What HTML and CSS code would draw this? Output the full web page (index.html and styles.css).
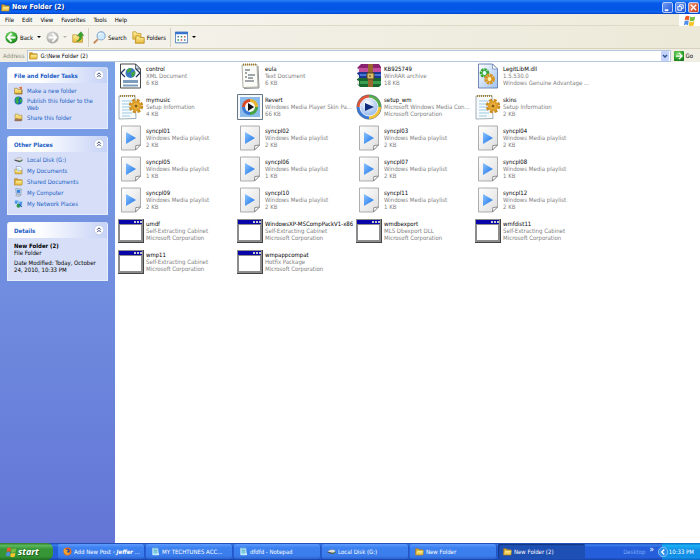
FILE: index.html
```html
<!DOCTYPE html>
<html lang="en">
<head>
<meta charset="utf-8">
<title>New Folder (2)</title>
<link rel="stylesheet" href="styles.css">
</head>
<body>
<svg class="sprite" aria-hidden="true">
  <defs>
    <linearGradient id="paper" x1="0" y1="0" x2="1" y2="1"><stop offset="0" stop-color="#fff"/><stop offset="1" stop-color="#dedede"/></linearGradient>
    <linearGradient id="play" x1="0" y1="0" x2="1" y2="1"><stop offset="0" stop-color="#8cc4ff"/><stop offset="1" stop-color="#1670e8"/></linearGradient>
    <linearGradient id="gold" x1="0" y1="0" x2="0" y2="1"><stop offset="0" stop-color="#fff3a0"/><stop offset="1" stop-color="#e8b93a"/></linearGradient>
    <radialGradient id="green" cx=".4" cy=".3" r=".8"><stop offset="0" stop-color="#8ee27c"/><stop offset=".6" stop-color="#2fa32b"/><stop offset="1" stop-color="#14701a"/></radialGradient>
    <radialGradient id="grey" cx=".4" cy=".3" r=".8"><stop offset="0" stop-color="#ddd"/><stop offset="1" stop-color="#a0a09c"/></radialGradient>
    <radialGradient id="orb" cx=".4" cy=".3" r=".8"><stop offset="0" stop-color="#fff"/><stop offset="1" stop-color="#86aee8"/></radialGradient>
    <linearGradient id="blue" x1="0" y1="0" x2="1" y2="1"><stop offset="0" stop-color="#fff"/><stop offset="1" stop-color="#9dc2f2"/></linearGradient>
  </defs>
  <symbol id="i-playlist" viewBox="0 0 26 26"><path d="M3.500 1h19v19l-5 5h-14z" fill="url(#paper)" stroke="#9a9a9a" stroke-width=".8"/><path d="M22.500 20l-5 5 .3-4.400z" fill="#fff" stroke="#777" stroke-width=".8"/><path d="M8 7l10 6-10 6z" fill="url(#play)"/></symbol>
  <symbol id="i-window" viewBox="0 0 26 26"><path d="M0 1h26v24H0z" fill="#8c8c8c"/><path d="M25 1h1v24H0v-1h25z" fill="#444"/><path d="M1 2h23v4H1z" fill="#0806a8"/><path d="M2 7h21v15H2z" fill="#fff"/><path d="M16 3h2v2h-2zM19 3h2v2h-2zM22 3h2v2h-2z" fill="#c8c8d0"/></symbol>
  <symbol id="i-xml" viewBox="0 0 26 26"><path d="M2.500 1h15l5 5v19h-20z" fill="#fff" stroke="#333" stroke-width=".9"/><path d="M17.500 1v5h5z" fill="#cde" stroke="#333" stroke-width=".7"/><circle cx="12.500" cy="10" r="5" fill="#3978c8"/><path d="M9 7q3-3 5-1l-2 3-3 1zM13 10l4-2q1 4-3 6z" fill="#45a63a"/><path d="M7 6L3 10l4 4M18 6l4 4-4 4" fill="none" stroke="#223a5c" stroke-width="1.300"/><path d="M5 17h15v3H5zM5 21.500h15v2H5z" fill="#7d9dbf"/></symbol>
  <symbol id="i-text" viewBox="0 0 26 26"><path d="M5 2l15-.5 1 22.500-15 .5z" fill="#fbfbf8" stroke="#9a9a90" stroke-width=".8"/><path d="M21 3l1 22-15 .5" fill="none" stroke="#777" stroke-width=".8"/><path d="M6 1.500h14" stroke="#a57b25" stroke-width="2" stroke-dasharray="1 1"/><path d="M8 7h5M8 10h2M11 12h7M8 14h2M11 15h5M8 18h9" stroke="#45505a"/></symbol>
  <symbol id="i-setup" viewBox="0 0 26 26"><path d="M1 2l16-.5 1 23L1 25z" fill="#f8fcff" stroke="#8b9aa0" stroke-width=".8"/><path d="M2 2h15" stroke="#a88538" stroke-width="2" stroke-dasharray="1 1"/><path d="M4 7h10M4 10h9M4 13h10M4 16h10M4 19h10M4 22h8" stroke="#9cc9df"/><circle cx="18" cy="12" r="5" fill="none" stroke="#c98c22" stroke-width="4.500" stroke-dasharray="2.500 1.430"/><circle cx="18" cy="12" r="4" fill="#f2bb42" stroke="#dda02c" stroke-width="2.500"/><circle cx="18" cy="12" r="1.600" fill="#8a5b14"/></symbol>
  <symbol id="i-wmp" viewBox="0 0 26 26"><circle cx="13" cy="13" r="12.500" fill="#637086"/><path d="M13 13V1A12 12 0 0 0 1 13z" fill="#dd5436"/><path d="M13 13V1a12 12 0 0 1 12 12z" fill="#55ad4a"/><path d="M13 13h12a12 12 0 0 1-12 12z" fill="#f3c43a"/><path d="M13 13v12A12 12 0 0 1 1 13z" fill="#3a79d5"/><circle cx="13" cy="13" r="9" fill="url(#orb)" stroke="#eef" stroke-width="1"/><path d="M9 9l9 4-9 4z" fill="#102e7b"/></symbol>
  <symbol id="i-skin" viewBox="0 0 26 26"><path d="M.5.5h25v25H.5z" fill="#f6f8fa" stroke="#657684"/><path d="M3 3h20v20H3z" fill="#8abbea"/><path d="M13 13V5a8 8 0 0 0-8 8z" fill="#d94a28"/><path d="M13 13V5a8 8 0 0 1 8 8z" fill="#e9b52d"/><path d="M13 13h8a8 8 0 0 1-8 8z" fill="#45a443"/><path d="M13 13v8a8 8 0 0 1-8-8z" fill="#3a79d5"/><circle cx="13" cy="13" r="5" fill="#f7f7f7"/><path d="M11 9l6 4-6 4z" fill="#111"/></symbol>
  <symbol id="i-rar" viewBox="0 0 26 26"><path d="M1 5l4-4h18l2 3v5H3z" fill="#8b2470"/><path d="M3 5h22v4H3z" fill="#c2509c"/><path d="M1 10l2-1h22v6H3z" fill="#1c3797"/><path d="M4 11h21v2H4z" fill="#4878d5"/><path d="M1 16l2-1h22v7l-2 2H4l-3-3z" fill="#17672f"/><path d="M4 18h21v3H4z" fill="#3ba052"/><path d="M1 5l2 1v3l-2-1zM1 11l2 1v3l-2-1zM1 17l2 1v4l-2-1z" fill="#eee"/><path d="M12 1h5v23h-5z" fill="#9b6730"/><path d="M11 10h7v6h-7z" fill="#dbc06c" stroke="#594019"/><path d="M14 12v2" stroke="#594019"/></symbol>
  <symbol id="i-dll" viewBox="0 0 26 26"><path d="M3.500 1h14l5 5v19h-19z" fill="url(#blue)" stroke="#637eac" stroke-width=".9"/><path d="M17.500 1v5h5z" fill="#fff" stroke="#637eac" stroke-width=".7"/><circle cx="9.500" cy="10" r="3.200" fill="#dff" stroke="#36a535" stroke-width="3.200" stroke-dasharray="2.300 .6"/><circle cx="9.500" cy="10" r="2.500" fill="#dff" stroke="#36a535"/><circle cx="14.500" cy="16" r="3.800" fill="none" stroke="#d89420" stroke-width="3.200" stroke-dasharray="2.400 .6"/><circle cx="14.500" cy="16" r="2.500" fill="#fff0b0" stroke="#d89420"/></symbol>
  <symbol id="i-folder" viewBox="0 0 16 16"><path d="M1 3h5l2 2h6v9H1z" fill="#e0a92b" stroke="#a17516"/><path d="M1 14L3 6h12l-1 8z" fill="url(#gold)" stroke="#b88a20" stroke-width=".8"/></symbol>
  <symbol id="i-folders" viewBox="0 0 16 16"><path d="M1 1h4l1 2h5v7H1z" fill="url(#gold)" stroke="#c39a34"/><path d="M5 6h4l1 2h5v7H4z" fill="url(#gold)" stroke="#b88a20"/></symbol>
  <symbol id="i-new" viewBox="0 0 16 16"><path d="M1 4h5l1 2h7v8H1z" fill="url(#gold)" stroke="#936b20"/><path d="M8 3l6-2v5z" fill="#e5692c"/><path d="M3 14h11V7" fill="none" stroke="#805b24"/></symbol>
  <symbol id="i-globe" viewBox="0 0 16 16"><circle cx="8" cy="8" r="7" fill="#195fbe"/><path d="M4 2q5-2 6 1L7 7l2 3-3 5Q0 9 4 2zM10 6l4-1q2 5-3 8z" fill="#35ad49"/></symbol>
  <symbol id="i-share" viewBox="0 0 16 16"><path d="M2 2h5l1 2h6v9H2z" fill="url(#gold)" stroke="#a57c27"/><path d="M1 13q3-5 7-2h5v3H3z" fill="#ac795b" stroke="#60504a" stroke-width=".7"/></symbol>
  <symbol id="i-disk" viewBox="0 0 16 16"><path d="M1 8l5-3h7l2 3v2l-5 3-9-3z" fill="#555"/><path d="M1 8l5-3h7l2 3-5 2z" fill="#ddd"/><path d="M10 11l4-2" stroke="#55d755"/></symbol>
  <symbol id="i-docs" viewBox="0 0 16 16"><path d="M4 1h7l3 3v9H4z" fill="#fff" stroke="#678bb4"/><path d="M1 6h4l1 2h8v6H2z" fill="url(#gold)" stroke="#a88838"/><path d="M6 4h4v6H6z" fill="#b6def3"/></symbol>
  <symbol id="i-computer" viewBox="0 0 16 16"><path d="M3 1l10 1-1 9-8-1z" fill="#dce6f0" stroke="#667d9c"/><path d="M5 3l6 .5-.5 5.500L5 8.500z" fill="#3687df"/><path d="M4 12h9l-3 3-7-1z" fill="#d5dce5" stroke="#687890" stroke-width=".7"/></symbol>
  <symbol id="i-network" viewBox="0 0 16 16"><path d="M1 2h8v7H1zM7 4h8v7H7z" fill="#4b96e6" stroke="#dce9f6"/><circle cx="8" cy="12" r="3.500" fill="#2b9a52"/><path d="M9 9l5 5" stroke="#1b5ba7" stroke-width="2"/></symbol>
  <symbol id="i-note" viewBox="0 0 16 16"><path d="M3 2h9l1 12H3z" fill="#9be0ef" stroke="#e9faff"/><path d="M4 2h8M5 6h6M5 9h6" stroke="#3b86a7"/><path d="M11 14l3-4v4z" fill="#e9faff"/></symbol>
  <symbol id="i-fox" viewBox="0 0 16 16"><circle cx="8" cy="8" r="7" fill="#e6661b"/><circle cx="8" cy="7" r="4" fill="#2a4aa0"/><path d="M1 5l2-3 3 3 4 1-3 2q1 4 7 1-2 6-8 5-5-2-5-9z" fill="#f2a12c"/></symbol>
  <symbol id="i-flag" viewBox="0 0 16 16"><path d="M3 3q3-2 5 0L7 8q-2-2-5 0z" fill="#ef5b28"/><path d="M9 3q2 2 6 0l-1 5q-4 2-6 0z" fill="#79bd42"/><path d="M2 9q3-2 5 0l-1 5q-2-2-5 0z" fill="#4f8de8"/><path d="M8 9q2 2 6 0l-1 5q-4 2-6 0z" fill="#f7c52c"/></symbol>
  <symbol id="i-back" viewBox="0 0 16 16"><circle cx="8" cy="8" r="7.500" fill="url(#green)"/><path d="M8 3L3.500 8 8 13M4 8h9" fill="none" stroke="#fff" stroke-width="2.200"/></symbol>
  <symbol id="i-forward" viewBox="0 0 16 16"><circle cx="8" cy="8" r="7.500" fill="url(#grey)"/><path d="M8 3l4.500 5L8 13M12 8H3" fill="none" stroke="#fff" stroke-width="2.200"/></symbol>
  <symbol id="i-up" viewBox="0 0 16 16"><path d="M1 5h5l1 2h7v8H1z" fill="url(#gold)" stroke="#b99634"/><path d="M6 14q5-2 4-8H7l5-5 3.500 5H13q1 7-7 8z" fill="#38a52d" stroke="#20751c" stroke-width=".6"/></symbol>
  <symbol id="i-search" viewBox="0 0 16 16"><path d="M6 10l-5 5" stroke="#c88c60" stroke-width="2.400"/><circle cx="10" cy="6" r="5" fill="#cfeafc" stroke="#86a6c8" stroke-width="1.300"/><path d="M7 5q1-2 3-2" fill="none" stroke="#fff" stroke-width="1.300"/></symbol>
  <symbol id="i-views" viewBox="0 0 16 16"><path d="M.5 1.500h15v13H.5z" fill="#fff" stroke="#3469b5"/><path d="M0 1h16v3H0z" fill="#3973cc"/><path d="M3 6h2v2H3zM11 10h2v2h-2z" fill="#4a7db5"/><path d="M7 6h2v2H7zM3 10h2v2H3z" fill="#45954d"/><path d="M11 6h2v2h-2zM7 10h2v2H7z" fill="#cb604c"/></symbol>
  <symbol id="i-go" viewBox="0 0 16 16"><path d="M1 0h14l1 1v14l-1 1H1l-1-1V1z" fill="url(#green)"/><path d="M8 3l5 5-5 5M12 8H3" fill="none" stroke="#fff" stroke-width="2"/></symbol>
  <symbol id="i-chevrons" viewBox="0 0 16 16"><circle cx="8" cy="8" r="7.500" fill="#fff" stroke="#b3bfdf"/><path d="M5 7.500l3-3 3 3M5 11.500l3-3 3 3" fill="none" stroke="#26366b" stroke-width="1.500"/></symbol>
  <symbol id="i-down" viewBox="0 0 16 16"><path d="M4 6l4 4 4-4" fill="none" stroke="#31528f" stroke-width="3"/></symbol>
  <symbol id="i-caret" viewBox="0 0 8 8"><path d="M0 2h8L4 6z" fill="currentColor"/></symbol>
  <symbol id="i-tray" viewBox="0 0 16 16"><circle cx="8" cy="8" r="7.500" fill="#2b8ee8" stroke="#b6e2ff"/><path d="M10 4L6 8l4 4" fill="none" stroke="#fff" stroke-width="2.400"/></symbol>
</svg>

<header class="titlebar">
  <svg class="small"><use href="#i-folder"/></svg>
  <h1>New Folder (2)</h1>
  <button class="caption" aria-label="Minimize"><svg viewBox="0 0 10 10"><path d="M2 7h4v2H2z" fill="#fff"/></svg></button>
  <button class="caption" aria-label="Restore"><svg viewBox="0 0 10 10"><path d="M4 4V2h4v4H6M2 4h4v4H2z" fill="none" stroke="#fff"/></svg></button>
  <button class="caption close" aria-label="Close"><svg viewBox="0 0 10 10"><path d="M2 2l6 6M8 2L2 8" stroke="#fff" stroke-width="1.500"/></svg></button>
</header>

<nav class="menubar">
  <button>File</button><button>Edit</button><button>View</button><button>Favorites</button><button>Tools</button><button>Help</button>
  <span class="brand"><svg class="large"><use href="#i-flag"/></svg></span>
</nav>

<div class="toolbar">
  <button class="tool"><svg class="large"><use href="#i-back"/></svg>Back<svg class="caret"><use href="#i-caret"/></svg></button>
  <button class="tool faded" aria-label="Forward"><svg class="large"><use href="#i-forward"/></svg><svg class="caret"><use href="#i-caret"/></svg></button>
  <button class="tool" aria-label="Up"><svg class="medium"><use href="#i-up"/></svg></button>
  <span class="rule"></span>
  <button class="tool"><svg class="large"><use href="#i-search"/></svg>Search</button>
  <button class="tool"><svg class="large"><use href="#i-folders"/></svg>Folders</button>
  <span class="rule"></span>
  <button class="tool views" aria-label="Views"><svg class="large"><use href="#i-views"/></svg><svg class="caret"><use href="#i-caret"/></svg></button>
</div>

<form class="addressbar">
  <label for="address">Address</label>
  <div class="field">
    <svg class="small"><use href="#i-folder"/></svg>
    <input id="address" type="text" value="G:\New Folder (2)">
    <button type="button" class="drop" aria-label="Show addresses"><svg><use href="#i-down"/></svg></button>
  </div>
  <button type="button" class="go"><svg class="icon"><use href="#i-go"/></svg>Go</button>
</form>

<div class="content">
  <aside class="sidebar">
    <section class="panel">
      <header><h2>File and Folder Tasks</h2><button aria-label="Collapse tasks"><svg><use href="#i-chevrons"/></svg></button></header>
      <ul class="tasklist">
        <li><svg class="small"><use href="#i-new"/></svg><a href="#">Make a new folder</a></li>
        <li><svg class="small"><use href="#i-globe"/></svg><a href="#">Publish this folder to the Web</a></li>
        <li><svg class="small"><use href="#i-share"/></svg><a href="#">Share this folder</a></li>
      </ul>
    </section>
    <section class="panel">
      <header><h2>Other Places</h2><button aria-label="Collapse places"><svg><use href="#i-chevrons"/></svg></button></header>
      <ul class="places">
        <li><svg class="small"><use href="#i-disk"/></svg><a href="#">Local Disk (G:)</a></li>
        <li><svg class="small"><use href="#i-docs"/></svg><a href="#">My Documents</a></li>
        <li><svg class="small"><use href="#i-folder"/></svg><a href="#">Shared Documents</a></li>
        <li><svg class="small"><use href="#i-computer"/></svg><a href="#">My Computer</a></li>
        <li><svg class="small"><use href="#i-network"/></svg><a href="#">My Network Places</a></li>
      </ul>
    </section>
    <section class="panel">
      <header><h2>Details</h2><button aria-label="Collapse details"><svg><use href="#i-chevrons"/></svg></button></header>
      <div class="details">
        <strong>New Folder (2)</strong>
        <p>File Folder</p>
        <p class="modified">Date Modified: Today, October 24, 2010, 10:33 PM</p>
      </div>
    </section>
  </aside>

  <main class="files">
    <article><svg><use href="#i-xml"/></svg><div><h3>control</h3><p>XML Document</p><p>6 KB</p></div></article>
    <article><svg><use href="#i-text"/></svg><div><h3>eula</h3><p>Text Document</p><p>6 KB</p></div></article>
    <article><svg><use href="#i-rar"/></svg><div><h3>KB925749</h3><p>WinRAR archive</p><p>18 KB</p></div></article>
    <article><svg><use href="#i-dll"/></svg><div><h3>LegitLibM.dll</h3><p>1.5.530.0</p><p>Windows Genuine Advantage ...</p></div></article>
    <article><svg><use href="#i-setup"/></svg><div><h3>mymusic</h3><p>Setup Information</p><p>4 KB</p></div></article>
    <article><svg><use href="#i-skin"/></svg><div><h3>Revert</h3><p>Windows Media Player Skin Pa...</p><p>66 KB</p></div></article>
    <article><svg><use href="#i-wmp"/></svg><div><h3>setup_wm</h3><p>Microsoft Windows Media Con...</p><p>Microsoft Corporation</p></div></article>
    <article><svg><use href="#i-setup"/></svg><div><h3>skins</h3><p>Setup Information</p><p>2 KB</p></div></article>
    <article><svg><use href="#i-playlist"/></svg><div><h3>syncpl01</h3><p>Windows Media playlist</p><p>2 KB</p></div></article>
    <article><svg><use href="#i-playlist"/></svg><div><h3>syncpl02</h3><p>Windows Media playlist</p><p>2 KB</p></div></article>
    <article><svg><use href="#i-playlist"/></svg><div><h3>syncpl03</h3><p>Windows Media playlist</p><p>2 KB</p></div></article>
    <article><svg><use href="#i-playlist"/></svg><div><h3>syncpl04</h3><p>Windows Media playlist</p><p>2 KB</p></div></article>
    <article><svg><use href="#i-playlist"/></svg><div><h3>syncpl05</h3><p>Windows Media playlist</p><p>1 KB</p></div></article>
    <article><svg><use href="#i-playlist"/></svg><div><h3>syncpl06</h3><p>Windows Media playlist</p><p>1 KB</p></div></article>
    <article><svg><use href="#i-playlist"/></svg><div><h3>syncpl07</h3><p>Windows Media playlist</p><p>2 KB</p></div></article>
    <article><svg><use href="#i-playlist"/></svg><div><h3>syncpl08</h3><p>Windows Media playlist</p><p>1 KB</p></div></article>
    <article><svg><use href="#i-playlist"/></svg><div><h3>syncpl09</h3><p>Windows Media playlist</p><p>2 KB</p></div></article>
    <article><svg><use href="#i-playlist"/></svg><div><h3>syncpl10</h3><p>Windows Media playlist</p><p>2 KB</p></div></article>
    <article><svg><use href="#i-playlist"/></svg><div><h3>syncpl11</h3><p>Windows Media playlist</p><p>1 KB</p></div></article>
    <article><svg><use href="#i-playlist"/></svg><div><h3>syncpl12</h3><p>Windows Media playlist</p><p>2 KB</p></div></article>
    <article><svg><use href="#i-window"/></svg><div><h3>umdf</h3><p>Self-Extracting Cabinet</p><p>Microsoft Corporation</p></div></article>
    <article><svg><use href="#i-window"/></svg><div><h3>WindowsXP-MSCompPackV1-x86</h3><p>Self-Extracting Cabinet</p><p>Microsoft Corporation</p></div></article>
    <article><svg><use href="#i-window"/></svg><div><h3>wmdbexport</h3><p>MLS Dbexport DLL</p><p>Microsoft Corporation</p></div></article>
    <article><svg><use href="#i-window"/></svg><div><h3>wmfdist11</h3><p>Self-Extracting Cabinet</p><p>Microsoft Corporation</p></div></article>
    <article><svg><use href="#i-window"/></svg><div><h3>wmp11</h3><p>Self-Extracting Cabinet</p><p>Microsoft Corporation</p></div></article>
    <article><svg><use href="#i-window"/></svg><div><h3>wmpappcompat</h3><p>Hotfix Package</p><p>Microsoft Corporation</p></div></article>
  </main>
</div>

<footer class="taskbar">
  <button class="start"><svg class="medium"><use href="#i-flag"/></svg>start</button>
  <div class="windows">
    <button><svg class="small"><use href="#i-fox"/></svg><span>Add New Post ‹ <i>Jeffer</i> ...</span></button>
    <button><svg class="small"><use href="#i-note"/></svg><span>MY TECHTUNES ACC...</span></button>
    <button><svg class="small"><use href="#i-note"/></svg><span>dfdfd - Notepad</span></button>
    <button><svg class="small"><use href="#i-disk"/></svg><span>Local Disk (G:)</span></button>
    <button><svg class="small"><use href="#i-folder"/></svg><span>New Folder</span></button>
    <button class="active"><svg class="small"><use href="#i-folder"/></svg><span>New Folder (2)</span></button>
  </div>
  <div class="desktop">Desktop <sup>»</sup></div>
  <div class="tray"><button aria-label="Show hidden icons"><svg class="icon"><use href="#i-tray"/></svg></button><time>10:33 PM</time></div>
</footer>
</body>
</html>
```
FILE: styles.css
```css
* { box-sizing: border-box; }

body {
  margin: 0;
  height: 100vh;
  display: flex;
  flex-direction: column;
  overflow: hidden;
  background: #fff;
  color: #000;
  font: 6px/7px "DejaVu Sans Condensed", "Noto Sans", sans-serif;
}

h1, h2, h3, p, ul { margin: 0; padding: 0; }
ul { list-style: none; }
a { color: #215dc6; text-decoration: none; }
button, input { margin: 0; padding: 0; border: 0; background: none; color: inherit; font: inherit; }
svg { display: block; flex: none; }

.sprite { position: absolute; width: 0; height: 0; }
.icon { width: 10px; height: 10px; }
.small { width: 9px; height: 9px; }
.medium { width: 12px; height: 12px; }
.large { width: 13px; height: 13px; }
.caret { width: 4px; height: 4px; }

.titlebar {
  flex: none;
  height: 14px;
  display: flex;
  align-items: center;
  gap: 2px;
  padding: 0 1px;
  background: linear-gradient(#2b80f5, #0458e8 25%, #0456e4 70%, #0a64f8 85%, #0340c0);
  color: #fff;
}
.titlebar h1 { flex: 1; font-size: 7px; text-shadow: 1px 1px 0 #0a2f8a; }
.caption {
  width: 11px;
  height: 11px;
  border: 1px solid #b8cdf6;
  border-radius: 2px;
  background: linear-gradient(135deg, #6f9df4, #2055d8);
}
.caption svg { width: 9px; height: 9px; }
.close { background: linear-gradient(135deg, #f09a7a, #d13a10); }

.menubar {
  flex: none;
  height: 12px;
  display: flex;
  align-items: center;
  gap: 8px;
  padding-left: 5px;
  background: linear-gradient(90deg, #f7f7f3, #eeead9);
  border-bottom: 1px solid #dedac8;
}
.brand {
  width: 21px;
  height: 12px;
  margin-left: auto;
  display: grid;
  place-items: center;
  background: #fff;
}

.toolbar {
  flex: none;
  height: 23px;
  display: flex;
  align-items: center;
  gap: 5px;
  padding: 0 5px;
  background: linear-gradient(90deg, #f5f4ee, #ece9d8);
  border-bottom: 1px solid #d8d2bd;
}
.tool { display: flex; align-items: center; gap: 2px; }
.tool .caret { margin-left: 2px; }
.rule { width: 1px; height: 19px; margin: 0 -1px; background: #d5d1c0; }
.faded { color: #b5b3a8; }

.addressbar {
  flex: none;
  height: 13px;
  display: flex;
  align-items: center;
  gap: 3px;
  padding: 0 7px 0 3px;
  background: #f0eee2;
}
.addressbar label { color: #8a887c; }
.field {
  flex: 1;
  height: 12px;
  display: flex;
  align-items: center;
  gap: 2px;
  padding: 0 1px;
  border: 1px solid #b5c7dd;
  background: #fff;
}
.field input { flex: 1; height: 10px; min-width: 0; outline: 0; }
.drop { width: 8px; height: 10px; background: #c3d3fb; border-radius: 1px; }
.drop svg { width: 8px; height: 8px; }
.go { display: flex; align-items: center; gap: 2px; }

.content { flex: 1; min-height: 0; display: flex; }

.sidebar {
  flex: none;
  width: 115px;
  padding: 5px 7px;
  display: flex;
  flex-direction: column;
  gap: 7px;
  background: linear-gradient(#7ba2e7, #6375d6);
}
.panel {
  background: #d6dff7;
  border: 1px solid #e8edfb;
  border-top: 0;
  border-radius: 3px 3px 0 0;
}
.panel header {
  height: 16px;
  display: flex;
  align-items: center;
  justify-content: space-between;
  padding: 0 3px 0 6px;
  border-radius: 3px 3px 0 0;
  background: linear-gradient(90deg, #fff 30%, #c6d3f7);
}
.panel h2 { font-size: 6px; color: #215dc6; }
.panel header svg { width: 10px; height: 10px; }
.panel ul { display: flex; flex-direction: column; padding: 4px 5px 7px 6px; }
.panel li { display: flex; gap: 4px; }
.panel li svg { margin: -1px 0; }
.tasklist { gap: 3px; }
.places { gap: 4px; }
.details { padding: 4px 6px 7px; }
.details strong { display: block; }
.modified { margin-top: 3px; }

.files {
  flex: 1;
  display: grid;
  grid-template-columns: repeat(auto-fill, 119px);
  grid-auto-rows: 27px;
  align-content: start;
  row-gap: 4px;
  padding: 0 3px;
}
.files article { display: flex; align-items: center; gap: 2px; white-space: nowrap; }
.files article > svg { width: 26px; height: 26px; }
.files h3 { font-size: 6px; font-weight: 400; }
.files p { color: #808080; }

.taskbar {
  flex: none;
  height: 17px;
  display: flex;
  align-items: stretch;
  background: linear-gradient(#1941a5, #3b80ee 12%, #245edb 25%, #245edb 85%, #1941a5);
  color: #fff;
}
.start {
  width: 53px;
  display: flex;
  align-items: center;
  gap: 1px;
  padding-left: 5px;
  border-radius: 0 6px 6px 0;
  background: linear-gradient(#2c7a2c, #5cb85c 15%, #379637 35%, #359535 80%, #1f6a1f);
  font: italic bold 9px/10px "Open Sans", sans-serif;
  text-shadow: 1px 1px 1px #1d5a1d;
}
.windows { flex: 1; display: flex; gap: 1px; padding: 1px 5px; }
.windows button {
  flex: 0 1 87px;
  min-width: 0;
  display: flex;
  align-items: center;
  gap: 2px;
  padding-left: 5px;
  border-radius: 2px;
  background: linear-gradient(#5e9bff, #3c81f0 25%, #3a7cec 80%, #2b63cf);
  box-shadow: inset -1px 0 0 #2458c0;
  white-space: nowrap;
}
.windows .active { background: #1e4fb3; box-shadow: inset 1px 1px 1px #123680; }
.windows i { font-weight: 700; }
.desktop { display: flex; align-items: center; gap: 4px; padding-right: 8px; color: #7ea9f5; }
.desktop sup { color: #fff; font-size: 8px; line-height: 7px; padding-bottom: 4px; }
.tray {
  display: flex;
  align-items: center;
  gap: 1px;
  padding-right: 6px;
  background: linear-gradient(#0d6bc4, #19b0f4 15%, #1290e8 40%, #1290e8 85%, #0d6bc4);
}
.tray button { margin-left: -4px; }
```
